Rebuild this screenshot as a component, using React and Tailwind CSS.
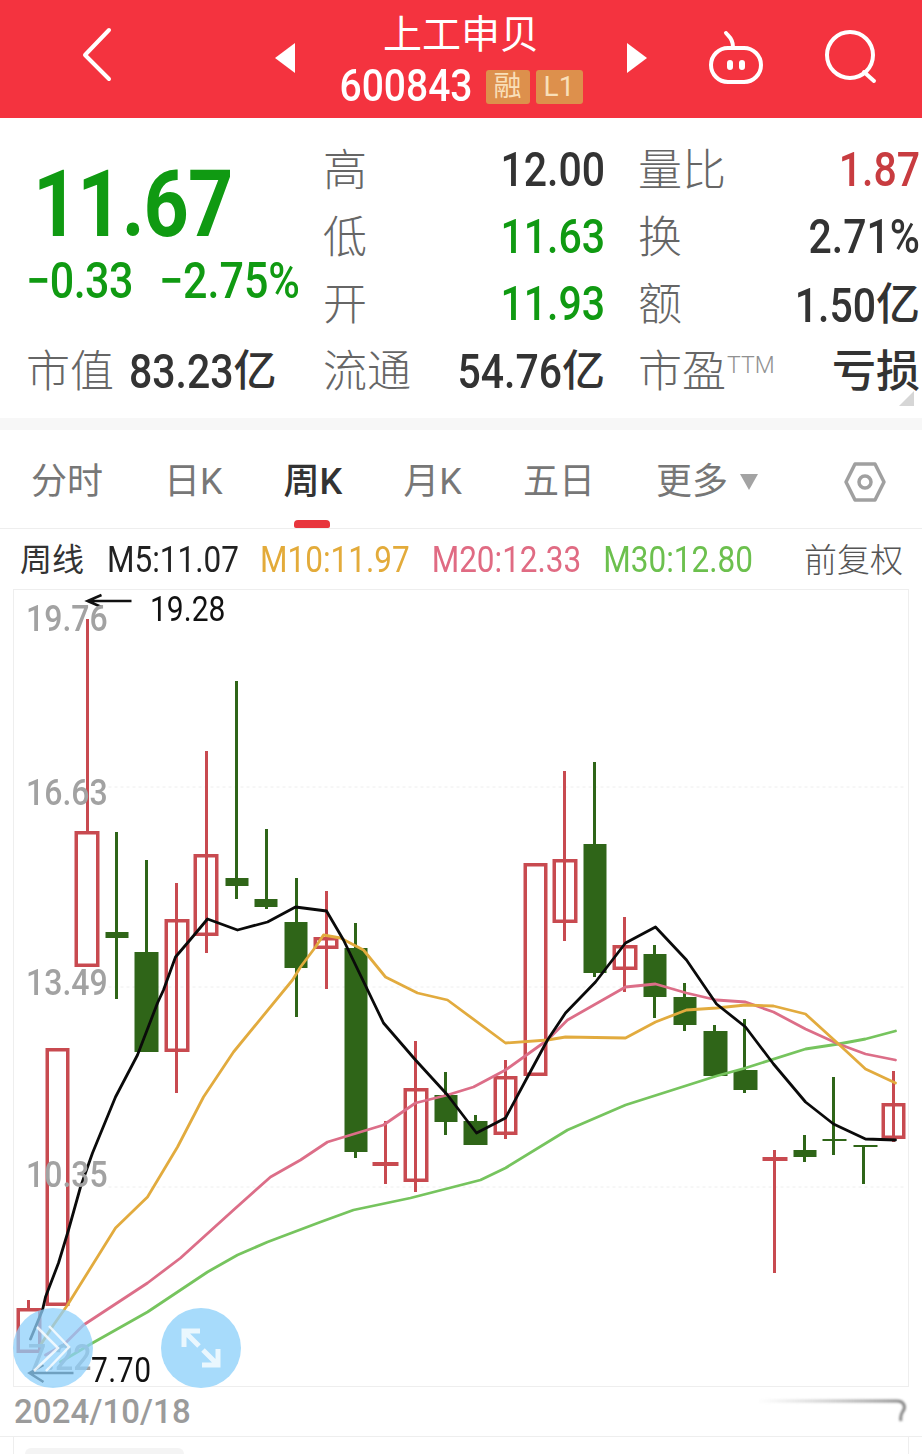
import React from 'react';

// [x, wickTop, wickBot, left, right, bodyTop, bodyBot, kind]  kind: h = hollow red, g = solid green, r = flat red
const candles = [
  [28, 1300, 1308, 16, 41, 1308, 1353, 'h'],
  [57, 1048, 1048, 45, 69, 1048, 1306, 'h'],
  [87, 619, 831, 74, 99, 831, 967, 'h'],
  [116, 832, 999, 105, 128, 932, 938, 'g'],
  [146, 860, 952, 134, 158, 952, 1052, 'g'],
  [176, 883, 1093, 164, 189, 919, 1052, 'h'],
  [206, 751, 953, 193, 218, 854, 936, 'h'],
  [236, 681, 899, 225, 248, 878, 886, 'g'],
  [266, 829, 909, 254, 277, 899, 907, 'g'],
  [296, 878, 1017, 284, 307, 922, 968, 'g'],
  [326, 891, 989, 313, 338, 937, 949, 'h'],
  [355, 923, 1158, 344, 367, 948, 1152, 'g'],
  [385, 1121, 1184, 372, 398, 1162, 1166, 'r'],
  [415, 1041, 1192, 403, 428, 1088, 1182, 'h'],
  [445, 1072, 1135, 434, 457, 1095, 1122, 'g'],
  [475, 1115, 1145, 463, 487, 1121, 1145, 'g'],
  [505, 1060, 1139, 493, 517, 1076, 1135, 'h'],
  [535, 863, 863, 523, 547, 863, 1076, 'h'],
  [564, 771, 941, 552, 577, 859, 923, 'h'],
  [594, 762, 977, 583, 606, 844, 973, 'g'],
  [624, 917, 992, 612, 637, 945, 970, 'h'],
  [654, 945, 1018, 643, 666, 954, 997, 'g'],
  [684, 983, 1031, 673, 696, 997, 1025, 'g'],
  [714, 1025, 1076, 703, 727, 1031, 1076, 'g'],
  [744, 1019, 1093, 733, 757, 1070, 1090, 'g'],
  [774, 1150, 1273, 762, 787, 1157, 1161, 'r'],
  [804, 1135, 1162, 793, 816, 1150, 1157, 'g'],
  [833, 1077, 1155, 822, 846, 1139, 1141, 'g'],
  [863, 1145, 1184, 853, 877, 1145, 1147, 'g'],
  [893, 1071, 1142, 881, 905, 1103, 1139, 'h'],
];

const m5 = '30,1339 42,1310 45,1297 58,1263 68,1230 80,1187 92,1153 115,1097 137,1055 157,1003 163,990 175,957 192,937 207,919 237,930 267,922 295,907 326,911 343,940 383,1023 415,1060 447,1095 476,1133 505,1118 527,1077 547,1040 565,1013 595,982 625,943 655,927 686,960 716,1004 745,1027 773,1064 805,1102 833,1124 865,1139 895,1140';
const m10 = '40,1345 53,1325 67,1305 115,1228 147,1197 177,1147 203,1097 233,1052 292,980 300,967 315,947 323,935 340,938 363,950 385,977 417,993 447,1000 505,1043 547,1040 565,1037 625,1038 655,1022 686,1010 716,1008 745,1005 773,1006 805,1014 838,1044 865,1069 895,1083';
const m20 = '45,1355 63,1345 83,1325 147,1283 180,1258 233,1210 270,1177 300,1160 327,1142 383,1125 415,1103 447,1095 473,1087 505,1070 547,1040 567,1020 625,987 655,984 686,993 716,1000 745,1002 773,1012 805,1029 838,1044 865,1054 895,1060';
const m30 = '60,1362 92,1343 147,1312 207,1272 237,1255 267,1242 320,1222 353,1210 410,1198 480,1180 505,1168 567,1130 625,1105 716,1076 745,1068 805,1049 838,1044 865,1039 895,1031';

const Num = ({ children, className = '' }) => (
  <span className={`inline-block scale-y-[1.16] ${className}`}>{children}</span>
);

const Stat = ({ label, children, labelExtra }) => (
  <div className="flex items-center justify-between h-[67px]">
    <span className="text-[44px] font-light text-[#666666] leading-none">
      {label}
      {labelExtra}
    </span>
    {children}
  </div>
);

const Candles = () => (
  <svg viewBox="14 590 893 796" className="w-full h-full block">
    {[787, 987, 1187].map((y) => (
      <line key={y} x1="108" x2="905" y1={y} y2={y} stroke="#eeeeee" strokeWidth="1" strokeDasharray="3 3" />
    ))}
    {candles.map(([x, top, bot, left, right, bodyTop, bodyBot, kind]) => {
      const isGreen = kind === 'g';
      const color = isGreen ? '#2f6518' : '#c84a50';
      return (
        <g key={x}>
          <line x1={x} x2={x} y1={top} y2={bot} stroke={color} strokeWidth="3" />
          {kind === 'h' ? (
            <rect x={left + 1.75} y={bodyTop + 1.75} width={right - left - 3.5} height={bodyBot - bodyTop - 3.5} fill="none" stroke={color} strokeWidth="3.5" />
          ) : (
            <rect x={left} y={bodyTop} width={right - left} height={bodyBot - bodyTop} fill={color} />
          )}
        </g>
      );
    })}
    <g fill="none" strokeLinejoin="round" strokeLinecap="round">
      <polyline points={m30} stroke="#76c45e" strokeWidth="2.8" />
      <polyline points={m20} stroke="#dc6e88" strokeWidth="2.8" />
      <polyline points={m10} stroke="#e2ab3e" strokeWidth="2.8" />
      <polyline points={m5} stroke="#0a0a0a" strokeWidth="2.8" />
    </g>
    <g fill="none" stroke="#111111" strokeWidth="2.5">
      <path d="M87 601H131M101 595L87 601L101 607" />
      <path d="M29 1373H73M43 1365L29 1373L43 1382" />
    </g>
  </svg>
);

export default function App() {
  return (
    <div className="w-[922px] h-[1454px] overflow-hidden bg-white font-['Roboto','Noto_Sans_CJK_SC',sans-serif] text-[#333333]">
      {/* Header */}
      <header className="relative flex items-center justify-center h-[118px] bg-[#f4333f] text-white">
        <svg className="absolute left-[80px] top-[24px]" width="36" height="62" viewBox="0 0 36 62" fill="none" stroke="#fff" strokeWidth="4" strokeLinecap="round" strokeLinejoin="round">
          <path d="M29 6L5 31L29 55" />
        </svg>
        <svg className="mr-[43px] mt-[-3px]" width="20" height="30" viewBox="0 0 20 30" fill="#fff"><path d="M20 0V30L0 15Z" /></svg>
        <div className="flex flex-col items-center w-[246px]">
          <div className="text-[39px] leading-[44px] mt-[-2px]">上工申贝</div>
          <div className="flex items-center mt-[13px] h-[34px]">
            <Num className="text-[39px] font-medium leading-none scale-y-[1.2]">600843</Num>
            <span className="flex items-center justify-center w-[44px] h-[34px] ml-[13px] rounded-[3px] bg-[#dd904c] text-[#f9dfb8] text-[28px] leading-none">融</span>
            <span className="flex items-center justify-center w-[47px] h-[34px] ml-[6px] rounded-[3px] bg-[#dd904c] text-[#f9dfb8] text-[28px] leading-none">L1</span>
          </div>
        </div>
        <svg className="ml-[43px] mt-[-3px]" width="20" height="30" viewBox="0 0 20 30" fill="#fff"><path d="M0 0V30L20 15Z" /></svg>
        <svg className="absolute left-[706px] top-[28px]" width="60" height="58" viewBox="0 0 60 58" fill="none" stroke="#fff" strokeWidth="4" strokeLinecap="round">
          <rect x="5" y="20" width="50" height="34" rx="17" />
          <path d="M20 5C22 8 27 10 27 19" />
          <path d="M24 35V39M36 35V39" strokeWidth="6" />
        </svg>
        <svg className="absolute left-[822px] top-[28px]" width="58" height="56" viewBox="0 0 58 56" fill="none" stroke="#fff" strokeWidth="4" strokeLinecap="round">
          <circle cx="28" cy="27" r="23" />
          <path d="M42 44L52 53" />
        </svg>
      </header>

      {/* Quote */}
      <section className="relative grid grid-cols-[262px_282px_282px] auto-rows-[67px] gap-x-[33px] pl-[28px] pt-[19px] h-[300px]">
        <div className="row-span-3 flex flex-col text-[#109a12]">
          <Num className="text-[79px] font-bold leading-none mt-[28px] ml-[5px] self-start scale-y-[1.18] tracking-[-1px]">11.67</Num>
          <div className="flex text-[43px] font-medium leading-none mt-[16px] ml-[-2px] w-[274px] justify-between">
            <Num className="scale-y-[1.1] tracking-[-0.5px]">−0.33</Num>
            <Num className="scale-y-[1.1]">−2.75%</Num>
          </div>
        </div>
        <Stat label="高"><Num className="text-[41px] font-medium leading-none">12.00</Num></Stat>
        <Stat label="量比"><Num className="text-[41px] font-medium leading-none text-[#c83c40]">1.87</Num></Stat>
        <Stat label="低"><Num className="text-[41px] font-medium leading-none text-[#109a12]">11.63</Num></Stat>
        <Stat label="换"><Num className="text-[41px] font-medium leading-none">2.71%</Num></Stat>
        <Stat label="开"><Num className="text-[41px] font-medium leading-none text-[#109a12]">11.93</Num></Stat>
        <Stat label="额">
          <span className="text-[41px] font-medium leading-none"><Num>1.50</Num><span className="text-[44px]">亿</span></span>
        </Stat>
        <div className="flex items-center h-[67px] ml-[-2px]">
          <span className="text-[44px] font-light text-[#666666] leading-none">市值</span>
          <span className="ml-[15px] text-[41px] leading-none font-medium"><Num>83.23</Num><span className="text-[43px]">亿</span></span>
        </div>
        <Stat label="流通">
          <span className="text-[41px] leading-none font-medium"><Num>54.76</Num><span className="text-[43px]">亿</span></span>
        </Stat>
        <Stat label="市盈" labelExtra={<span className="relative top-[-14px] ml-[1px] text-[23px] text-[#909090]">TTM</span>}>
          <span className="text-[44px] leading-none font-medium">亏损</span>
        </Stat>
        <svg className="absolute left-[899px] top-[273px]" width="15" height="15" viewBox="0 0 15 15" fill="#d6d6d6"><path d="M15 0V15H0Z" /></svg>
      </section>
      <div className="h-[12px] bg-[#f7f7f7]" />

      {/* Period tabs */}
      <nav className="relative flex items-center h-[99px] pt-[6px] border-b border-[#eeeeee] text-[36px] text-[#777777] leading-none">
        <span className="ml-[31px]">分时</span>
        <span className="ml-[61px]">日K</span>
        <span className="ml-[61px] text-[#333333] font-medium">周K</span>
        <span className="ml-[61px]">月K</span>
        <span className="ml-[61px]">五日</span>
        <span className="ml-[61px]">更多</span>
        <svg className="ml-[12px]" width="18" height="16" viewBox="0 0 18 16" fill="#a3a3a3"><path d="M0 0H18L9 16Z" /></svg>
        <svg className="ml-[86px]" width="42" height="40" viewBox="0 0 42 40" fill="none" stroke="#a0a0a0" strokeWidth="3.5">
          <path d="M2 20L11 2H31L40 20L31 38H11Z" strokeLinejoin="round" />
          <circle cx="21" cy="20" r="6" />
        </svg>
        <div className="absolute left-[294px] bottom-0 w-[36px] h-[8px] rounded-t-[4px] rounded-b-[2px] bg-[#e8363d]" />
      </nav>

      {/* MA values */}
      <div className="flex items-center gap-[21px] h-[60px] pt-[2px] pl-[20px] pr-[19px] text-[31.5px] leading-none">
        <span className="text-[32px] text-[#333333] mr-[2px]">周线</span>
        <Num className="text-[#222222]">M5:11.07</Num>
        <Num className="text-[#e3ab3a]">M10:11.97</Num>
        <Num className="text-[#e06b83] ml-[1px]">M20:12.33</Num>
        <Num className="text-[#6cc04e] ml-[1px]">M30:12.80</Num>
        <span className="ml-auto text-[33px] font-light text-[#555555]">前复权</span>
      </div>

      {/* Chart */}
      <div className="relative mx-[13px] h-[798px] border border-[#eeeeee]">
        <Candles />
        {[
          { label: '19.76', cls: 'top-[12px] left-[12px]' },
          { label: '16.63', cls: 'top-[186px] left-[12px]' },
          { label: '13.49', cls: 'top-[376px] left-[12px]' },
          { label: '10.35', cls: 'top-[568px] left-[12px]' },
        ].map((item) => (
          <Num key={item.label} className={`absolute text-[32px] font-medium leading-[32px] text-[#a2a2a2] ${item.cls}`}>{item.label}</Num>
        ))}
        <Num className="absolute top-[751px] left-[14px] text-[32px] font-medium leading-[32px] text-[#a2a2a2]">7.22</Num>
        <Num className="absolute top-[4px] left-[136px] text-[30px] leading-[30px] text-[#111111]">19.28</Num>
        <Num className="absolute top-[765px] left-[77px] text-[30px] leading-[30px] tracking-[0.5px] text-[#111111]">7.70</Num>

        <div className="absolute left-[-1px] top-[718px] flex items-center justify-center w-[80px] h-[80px] rounded-full bg-[#8fd0fb]/75">
          <svg width="54" height="62" viewBox="0 0 54 62" fill="none" stroke="#fff" strokeWidth="2.5" strokeOpacity="0.8">
            <path d="M11 10L32 31L8 54" />
            <path d="M23 9L43 30L20 54" />
          </svg>
        </div>
        <div className="absolute left-[147px] top-[718px] flex items-center justify-center w-[80px] h-[80px] rounded-full bg-[#a7dbfb]">
          <svg width="44" height="44" viewBox="0 0 44 44" fill="none" stroke="#eaf7fe" strokeWidth="5">
            <path d="M5 21V5H21M5 5L20 20" />
            <path d="M39 23V39H23M39 39L24 24" />
          </svg>
        </div>
      </div>

      {/* Date row */}
      <div className="flex items-center justify-between h-[50px] pl-[14px] pr-[15px] border-b border-[#eeeeee]">
        <span className="text-[33px] leading-none font-medium text-[#9b9b9b] tracking-[0.1px]">2024/10/18</span>
        <svg className="blur-[1px]" width="150" height="34" viewBox="0 0 150 34" fill="none">
          <defs>
            <linearGradient id="smear" x1="0" x2="1" y1="0" y2="0">
              <stop offset="0" stopColor="#999" stopOpacity="0" />
              <stop offset="1" stopColor="#777" stopOpacity="0.9" />
            </linearGradient>
          </defs>
          <path d="M0 6H140C147 6 149 12 146 16C144 19 143 22 144 26" stroke="url(#smear)" strokeWidth="3" />
          <path d="M20 18H142" stroke="url(#smear)" strokeWidth="2" strokeOpacity="0.6" />
          <path d="M40 25H143" stroke="url(#smear)" strokeWidth="4" strokeOpacity="0.7" />
        </svg>
      </div>

      {/* Next panel, cut off by the screenshot */}
      <div className="mx-[13px] h-[20px] border-x border-[#eeeeee] pt-[11px] pl-[11px]">
        <div className="w-[159px] h-[12px] rounded-t-[6px] bg-[#f4f4f4]" />
      </div>
    </div>
  );
}
